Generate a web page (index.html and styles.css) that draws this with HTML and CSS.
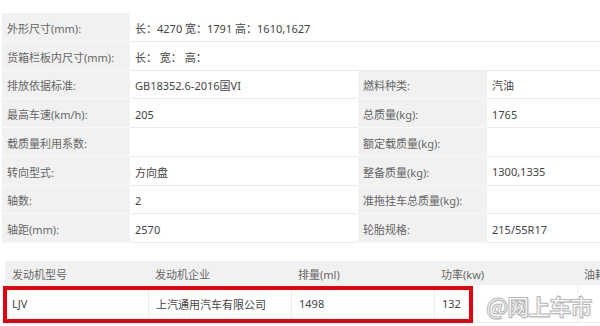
FILE: index.html
```html
<!DOCTYPE html>
<html lang="zh-CN">
<head>
<meta charset="utf-8">
<title>车辆参数</title>
<link rel="stylesheet" href="styles.css">
</head>
<body>
<div class="page">
  <div class="spec">
    <div class="row">
      <div class="lab">外形尺寸(mm):</div>
      <div class="val wide">长：4270 宽：1791 高：1610,1627</div>
    </div>
    <div class="row">
      <div class="lab">货箱栏板内尺寸(mm):</div>
      <div class="val wide">长： 宽： 高：</div>
    </div>
    <div class="row">
      <div class="lab">排放依据标准:</div>
      <div class="val">GB18352.6-2016国VI</div>
      <div class="lab">燃料种类:</div>
      <div class="val">汽油</div>
    </div>
    <div class="row">
      <div class="lab">最高车速(km/h):</div>
      <div class="val">205</div>
      <div class="lab">总质量(kg):</div>
      <div class="val">1765</div>
    </div>
    <div class="row">
      <div class="lab">载质量利用系数:</div>
      <div class="val"></div>
      <div class="lab">额定载质量(kg):</div>
      <div class="val"></div>
    </div>
    <div class="row">
      <div class="lab">转向型式:</div>
      <div class="val">方向盘</div>
      <div class="lab">整备质量(kg):</div>
      <div class="val">1300,1335</div>
    </div>
    <div class="row">
      <div class="lab">轴数:</div>
      <div class="val">2</div>
      <div class="lab">准拖挂车总质量(kg):</div>
      <div class="val"></div>
    </div>
    <div class="row">
      <div class="lab">轴距(mm):</div>
      <div class="val">2570</div>
      <div class="lab">轮胎规格:</div>
      <div class="val">215/55R17</div>
    </div>
  </div>

  <div class="engine">
    <div class="ehead">
      <div class="ec">发动机型号</div>
      <div class="ec">发动机企业</div>
      <div class="ec">排量(ml)</div>
      <div class="ec">功率(kw)</div>
      <div class="ec">油耗</div>
    </div>
    <div class="erow">
      <div class="ec">LJV</div>
      <div class="ec">上汽通用汽车有限公司</div>
      <div class="ec">1498</div>
      <div class="ec">132</div>
      <div class="ec"></div>
    </div>
    <div class="highlight"></div>
    <div class="watermark">@网上车市</div>
  </div>
</div>
</body>
</html>
```

FILE: styles.css
```css
html, body {
  margin: 0;
  padding: 0;
  background: #ffffff;
}

.page {
  width: 600px;
  height: 326px;
  overflow: hidden;
  font-family: "Noto Sans", "Noto Sans CJK SC", sans-serif;
  font-size: 11px;
  color: #444;
}

.spec {
  margin: 13px 0 0 2px;
  width: 640px;
}

.row {
  display: grid;
  grid-template-columns: 128px 228px 129px 1fr;
  height: 28.75px;
}

.lab, .val {
  display: flex;
  align-items: center;
  padding: 2px 0 0 5px;
  box-sizing: border-box;
  white-space: nowrap;
}

.lab {
  background: #f1f1f1;
  color: #666;
  border-bottom: 1px solid #f9f9f9;
}

.val {
  background: #fff;
  color: #444;
  border-bottom: 1px solid #ebebeb;
}

.val.wide {
  grid-column: 2 / 5;
}

.engine {
  position: relative;
  margin: 18px 0 0 5px;
  width: 720px;
}

.ehead, .erow {
  display: grid;
  grid-template-columns: repeat(5, 143px);
}

.ehead {
  height: 24px;
  background: #f1f1f1;
}

.erow {
  height: 38px;
  background: #fff;
}

.ec {
  display: flex;
  align-items: center;
  padding-left: 7px;
  white-space: nowrap;
  color: #555;
}

.ehead .ec {
  color: #666;
  padding-top: 2px;
}

.erow .ec {
  border-left: 1px solid #ececec;
  border-bottom: 1px solid #ececec;
  color: #444;
}

.erow .ec:first-child {
  border-left: none;
}

.highlight {
  position: absolute;
  left: -2px;
  top: 25px;
  width: 470px;
  height: 37px;
  box-sizing: border-box;
  border: 4px solid #e3000f;
}

.watermark {
  position: absolute;
  left: 481px;
  top: 28px;
  font-family: "Noto Sans CJK SC", sans-serif;
  font-size: 22px;
  font-weight: 700;
  letter-spacing: -1px;
  color: rgba(255, 255, 255, 0.85);
  -webkit-text-stroke: 1px #b8b8b8;
  text-shadow: 1px 1px 1px rgba(0, 0, 0, 0.15);
  white-space: nowrap;
}
```
